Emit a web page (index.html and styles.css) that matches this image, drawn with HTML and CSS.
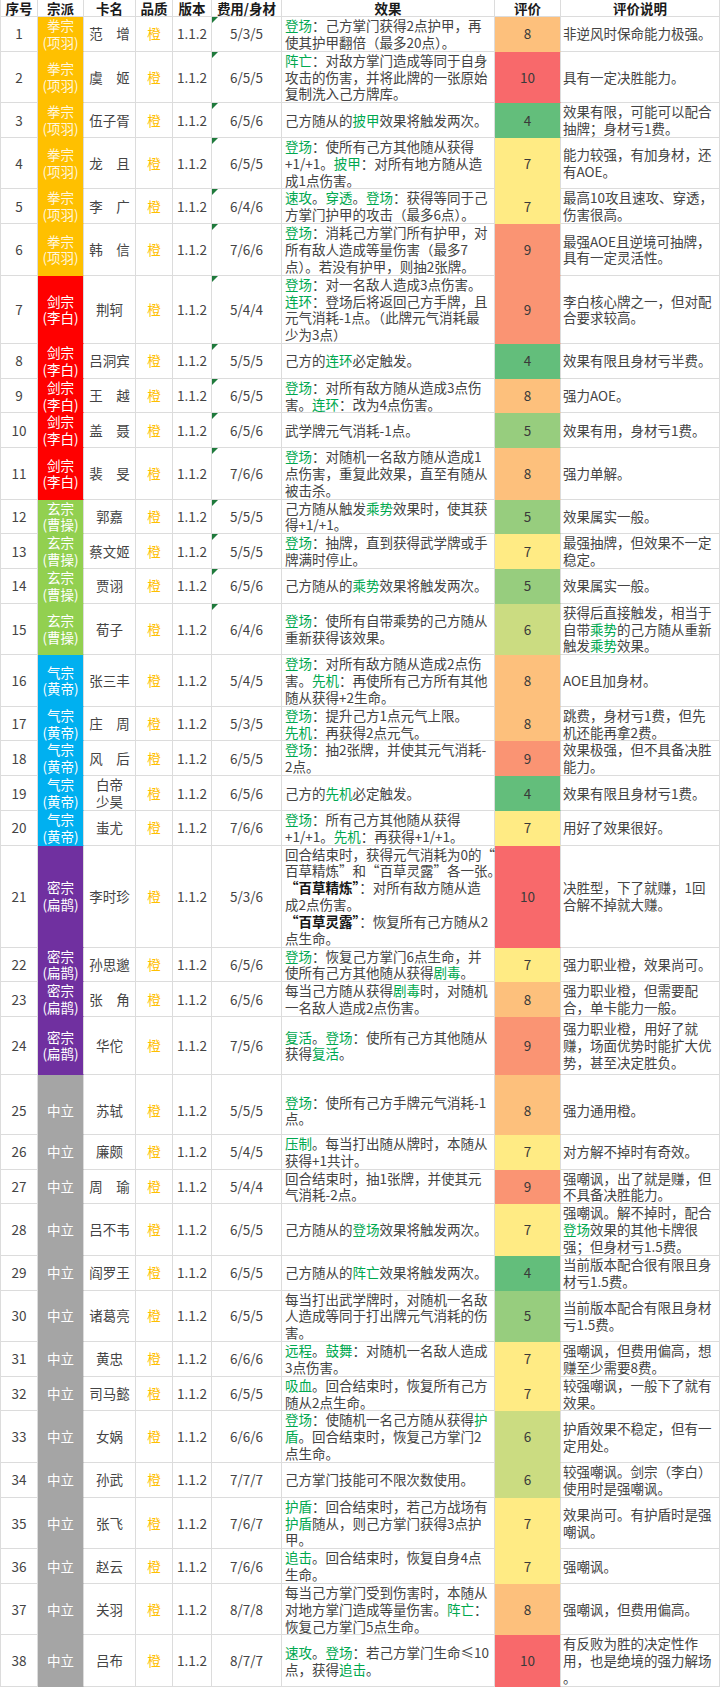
FILE: index.html
```html
<!DOCTYPE html>
<html lang="zh-CN">
<head>
<meta charset="utf-8">
<title>橙卡评价</title>
<link rel="stylesheet" href="styles.css">
</head>
<body>
<div class="page">
<table class="sheet">
<colgroup>
<col class="w-no"><col class="w-sect"><col class="w-name"><col class="w-q"><col class="w-v"><col class="w-c"><col class="w-e"><col class="w-s"><col class="w-d">
</colgroup>
<thead>
<tr><th>序号</th><th>宗派</th><th>卡名</th><th>品质</th><th>版本</th><th>费用/身材</th><th>效果</th><th>评价</th><th>评价说明</th></tr>
</thead>
<tbody>
<tr><td>1</td><td class="sect fist">拳宗<br>(项羽)</td><td>范　增</td><td class="q">橙</td><td>1.1.2</td><td class="c t">5/3/5</td><td class="e"><span class="k">登场</span>：己方掌门获得2点护甲，再<br>使其护甲翻倍（最多20点）。</td><td class="sc s8">8</td><td class="d">非逆风时保命能力极强。</td></tr>
<tr><td>2</td><td class="sect fist">拳宗<br>(项羽)</td><td>虞　姬</td><td class="q">橙</td><td>1.1.2</td><td class="c t">6/5/5</td><td class="e"><span class="k">阵亡</span>：对敌方掌门造成等同于自身<br>攻击的伤害，并将此牌的一张原始<br>复制洗入己方牌库。</td><td class="sc s10">10</td><td class="d">具有一定决胜能力。</td></tr>
<tr><td>3</td><td class="sect fist">拳宗<br>(项羽)</td><td>伍子胥</td><td class="q">橙</td><td>1.1.2</td><td class="c t">6/5/6</td><td class="e">己方随从的<span class="k">披甲</span>效果将触发两次。</td><td class="sc s4">4</td><td class="d">效果有限，可能可以配合<br>抽牌；身材亏1费。</td></tr>
<tr><td>4</td><td class="sect fist">拳宗<br>(项羽)</td><td>龙　且</td><td class="q">橙</td><td>1.1.2</td><td class="c t">6/5/5</td><td class="e"><span class="k">登场</span>：使所有己方其他随从获得<br>+1/+1。<span class="k">披甲</span>：对所有地方随从造<br>成1点伤害。</td><td class="sc s7">7</td><td class="d">能力较强，有加身材，还<br>有AOE。</td></tr>
<tr><td>5</td><td class="sect fist">拳宗<br>(项羽)</td><td>李　广</td><td class="q">橙</td><td>1.1.2</td><td class="c t">6/4/6</td><td class="e"><span class="k">速攻</span>。<span class="k">穿透</span>。<span class="k">登场</span>：获得等同于己<br>方掌门护甲的攻击（最多6点）。</td><td class="sc s7">7</td><td class="d">最高10攻且速攻、穿透，<br>伤害很高。</td></tr>
<tr><td>6</td><td class="sect fist">拳宗<br>(项羽)</td><td>韩　信</td><td class="q">橙</td><td>1.1.2</td><td class="c t">7/6/6</td><td class="e"><span class="k">登场</span>：消耗己方掌门所有护甲，对<br>所有敌人造成等量伤害（最多7<br>点）。若没有护甲，则抽2张牌。</td><td class="sc s9">9</td><td class="d">最强AOE且逆境可抽牌，<br>具有一定灵活性。</td></tr>
<tr><td>7</td><td class="sect sword">剑宗<br>(李白)</td><td>荆轲</td><td class="q">橙</td><td>1.1.2</td><td class="c t">5/4/4</td><td class="e"><span class="k">登场</span>：对一名敌人造成3点伤害。<br><span class="k">连环</span>：登场后将返回己方手牌，且<br>元气消耗-1点。（此牌元气消耗最<br>少为3点）</td><td class="sc s9">9</td><td class="d">李白核心牌之一，但对配<br>合要求较高。</td></tr>
<tr><td>8</td><td class="sect sword">剑宗<br>(李白)</td><td>吕洞宾</td><td class="q">橙</td><td>1.1.2</td><td class="c t">5/5/5</td><td class="e">己方的<span class="k">连环</span>必定触发。</td><td class="sc s4">4</td><td class="d">效果有限且身材亏半费。</td></tr>
<tr><td>9</td><td class="sect sword">剑宗<br>(李白)</td><td>王　越</td><td class="q">橙</td><td>1.1.2</td><td class="c t">6/5/5</td><td class="e"><span class="k">登场</span>：对所有敌方随从造成3点伤<br>害。<span class="k">连环</span>：改为4点伤害。</td><td class="sc s8">8</td><td class="d">强力AOE。</td></tr>
<tr><td>10</td><td class="sect sword">剑宗<br>(李白)</td><td>盖　聂</td><td class="q">橙</td><td>1.1.2</td><td class="c t">6/5/6</td><td class="e">武学牌元气消耗-1点。</td><td class="sc s5">5</td><td class="d">效果有用，身材亏1费。</td></tr>
<tr><td>11</td><td class="sect sword">剑宗<br>(李白)</td><td>裴　旻</td><td class="q">橙</td><td>1.1.2</td><td class="c t">7/6/6</td><td class="e"><span class="k">登场</span>：对随机一名敌方随从造成1<br>点伤害，重复此效果，直至有随从<br>被击杀。</td><td class="sc s8">8</td><td class="d">强力单解。</td></tr>
<tr><td>12</td><td class="sect xuan">玄宗<br>(曹操)</td><td>郭嘉</td><td class="q">橙</td><td>1.1.2</td><td class="c t">5/5/5</td><td class="e">己方随从触发<span class="k">乘势</span>效果时，使其获<br>得+1/+1。</td><td class="sc s5">5</td><td class="d">效果属实一般。</td></tr>
<tr><td>13</td><td class="sect xuan">玄宗<br>(曹操)</td><td>蔡文姬</td><td class="q">橙</td><td>1.1.2</td><td class="c t">5/5/5</td><td class="e"><span class="k">登场</span>：抽牌，直到获得武学牌或手<br>牌满时停止。</td><td class="sc s7">7</td><td class="d">最强抽牌，但效果不一定<br>稳定。</td></tr>
<tr><td>14</td><td class="sect xuan">玄宗<br>(曹操)</td><td>贾诩</td><td class="q">橙</td><td>1.1.2</td><td class="c t">6/5/6</td><td class="e">己方随从的<span class="k">乘势</span>效果将触发两次。</td><td class="sc s5">5</td><td class="d">效果属实一般。</td></tr>
<tr><td>15</td><td class="sect xuan">玄宗<br>(曹操)</td><td>荀子</td><td class="q">橙</td><td>1.1.2</td><td class="c t">6/4/6</td><td class="e"><span class="k">登场</span>：使所有自带乘势的己方随从<br>重新获得该效果。</td><td class="sc s6">6</td><td class="d">获得后直接触发，相当于<br>自带<span class="k">乘势</span>的己方随从重新<br>触发<span class="k">乘势</span>效果。</td></tr>
<tr><td>16</td><td class="sect qi">气宗<br>(黄帝)</td><td>张三丰</td><td class="q">橙</td><td>1.1.2</td><td class="c">5/4/5</td><td class="e"><span class="k">登场</span>：对所有敌方随从造成2点伤<br>害。<span class="k">先机</span>：再使所有己方所有其他<br>随从获得+2生命。</td><td class="sc s8">8</td><td class="d">AOE且加身材。</td></tr>
<tr><td>17</td><td class="sect qi">气宗<br>(黄帝)</td><td>庄　周</td><td class="q">橙</td><td>1.1.2</td><td class="c">5/3/5</td><td class="e"><span class="k">登场</span>：提升己方1点元气上限。<br><span class="k">先机</span>：再获得2点元气。</td><td class="sc s8">8</td><td class="d">跳费，身材亏1费，但先<br>机还能再拿2费。</td></tr>
<tr><td>18</td><td class="sect qi">气宗<br>(黄帝)</td><td>风　后</td><td class="q">橙</td><td>1.1.2</td><td class="c">6/5/5</td><td class="e"><span class="k">登场</span>：抽2张牌，并使其元气消耗-<br>2点。</td><td class="sc s9">9</td><td class="d">效果极强，但不具备决胜<br>能力。</td></tr>
<tr><td>19</td><td class="sect qi">气宗<br>(黄帝)</td><td>白帝<br>少昊</td><td class="q">橙</td><td>1.1.2</td><td class="c">6/5/6</td><td class="e">己方的<span class="k">先机</span>必定触发。</td><td class="sc s4">4</td><td class="d">效果有限且身材亏1费。</td></tr>
<tr><td>20</td><td class="sect qi">气宗<br>(黄帝)</td><td>蚩尤</td><td class="q">橙</td><td>1.1.2</td><td class="c">7/6/6</td><td class="e"><span class="k">登场</span>：所有己方其他随从获得<br>+1/+1。<span class="k">先机</span>：再获得+1/+1。</td><td class="sc s7">7</td><td class="d">用好了效果很好。</td></tr>
<tr><td>21</td><td class="sect mi">密宗<br>(扁鹊)</td><td>李时珍</td><td class="q">橙</td><td>1.1.2</td><td class="c">5/3/6</td><td class="e">回合结束时，获得元气消耗为0的“<br>百草精炼”和“百草灵露”各一张。<br><b class="bk">“百草精炼”</b>：对所有敌方随从造<br>成2点伤害。<br><b class="bk">“百草灵露”</b>：恢复所有己方随从2<br>点生命。</td><td class="sc s10">10</td><td class="d">决胜型，下了就赚，1回<br>合解不掉就大赚。</td></tr>
<tr><td>22</td><td class="sect mi">密宗<br>(扁鹊)</td><td>孙思邈</td><td class="q">橙</td><td>1.1.2</td><td class="c">6/5/6</td><td class="e"><span class="k">登场</span>：恢复己方掌门6点生命，并<br>使所有己方其他随从获得<span class="k">剧毒</span>。</td><td class="sc s7">7</td><td class="d">强力职业橙，效果尚可。</td></tr>
<tr><td>23</td><td class="sect mi">密宗<br>(扁鹊)</td><td>张　角</td><td class="q">橙</td><td>1.1.2</td><td class="c">6/5/6</td><td class="e">每当己方随从获得<span class="k">剧毒</span>时，对随机<br>一名敌人造成2点伤害。</td><td class="sc s8">8</td><td class="d">强力职业橙，但需要配<br>合，单卡能力一般。</td></tr>
<tr class="h58"><td>24</td><td class="sect mi">密宗<br>(扁鹊)</td><td>华佗</td><td class="q">橙</td><td>1.1.2</td><td class="c">7/5/6</td><td class="e"><span class="k">复活</span>。<span class="k">登场</span>：使所有己方其他随从<br>获得<span class="k">复活</span>。</td><td class="sc s9">9</td><td class="d">强力职业橙，用好了就<br>赚，场面优势时能扩大优<br>势，甚至决定胜负。</td></tr>
<tr class="h60"><td>25</td><td class="sect neu">中立</td><td>苏轼</td><td class="q">橙</td><td>1.1.2</td><td class="c">5/5/5</td><td class="e"><span class="k">登场</span>：使所有己方手牌元气消耗-1<br>点。</td><td class="sc s8">8</td><td class="d">强力通用橙。</td></tr>
<tr><td>26</td><td class="sect neu">中立</td><td>廉颇</td><td class="q">橙</td><td>1.1.2</td><td class="c">5/4/5</td><td class="e"><span class="k">压制</span>。每当打出随从牌时，本随从<br>获得+1共计。</td><td class="sc s7">7</td><td class="d">对方解不掉时有奇效。</td></tr>
<tr><td>27</td><td class="sect neu">中立</td><td>周　瑜</td><td class="q">橙</td><td>1.1.2</td><td class="c">5/4/4</td><td class="e">回合结束时，抽1张牌，并使其元<br>气消耗-2点。</td><td class="sc s9">9</td><td class="d">强嘲讽，出了就是赚，但<br>不具备决胜能力。</td></tr>
<tr><td>28</td><td class="sect neu">中立</td><td>吕不韦</td><td class="q">橙</td><td>1.1.2</td><td class="c">6/5/5</td><td class="e">己方随从的<span class="k">登场</span>效果将触发两次。</td><td class="sc s7">7</td><td class="d">强嘲讽。解不掉时，配合<br><span class="k">登场</span>效果的其他卡牌很<br>强；但身材亏1.5费。</td></tr>
<tr><td>29</td><td class="sect neu">中立</td><td>阎罗王</td><td class="q">橙</td><td>1.1.2</td><td class="c">6/5/5</td><td class="e">己方随从的<span class="k">阵亡</span>效果将触发两次。</td><td class="sc s4">4</td><td class="d">当前版本配合很有限且身<br>材亏1.5费。</td></tr>
<tr><td>30</td><td class="sect neu">中立</td><td>诸葛亮</td><td class="q">橙</td><td>1.1.2</td><td class="c">6/5/5</td><td class="e">每当打出武学牌时，对随机一名敌<br>人造成等同于打出牌元气消耗的伤<br>害。</td><td class="sc s5">5</td><td class="d">当前版本配合有限且身材<br>亏1.5费。</td></tr>
<tr><td>31</td><td class="sect neu">中立</td><td>黄忠</td><td class="q">橙</td><td>1.1.2</td><td class="c">6/6/6</td><td class="e"><span class="k">远程</span>。<span class="k">鼓舞</span>：对随机一名敌人造成<br>3点伤害。</td><td class="sc s7">7</td><td class="d">强嘲讽，但费用偏高，想<br>赚至少需要8费。</td></tr>
<tr><td>32</td><td class="sect neu">中立</td><td>司马懿</td><td class="q">橙</td><td>1.1.2</td><td class="c">6/5/5</td><td class="e"><span class="k">吸血</span>。回合结束时，恢复所有己方<br>随从2点生命。</td><td class="sc s7">7</td><td class="d">较强嘲讽，一般下了就有<br>效果。</td></tr>
<tr><td>33</td><td class="sect neu">中立</td><td>女娲</td><td class="q">橙</td><td>1.1.2</td><td class="c">6/6/6</td><td class="e"><span class="k">登场</span>：使随机一名己方随从获得<span class="k">护</span><br><span class="k">盾</span>。回合结束时，恢复己方掌门2<br>点生命。</td><td class="sc s6">6</td><td class="d">护盾效果不稳定，但有一<br>定用处。</td></tr>
<tr><td>34</td><td class="sect neu">中立</td><td>孙武</td><td class="q">橙</td><td>1.1.2</td><td class="c">7/7/7</td><td class="e">己方掌门技能可不限次数使用。</td><td class="sc s6">6</td><td class="d">较强嘲讽。剑宗（李白）<br>使用时是强嘲讽。</td></tr>
<tr><td>35</td><td class="sect neu">中立</td><td>张飞</td><td class="q">橙</td><td>1.1.2</td><td class="c">7/6/7</td><td class="e"><span class="k">护盾</span>：回合结束时，若己方战场有<br><span class="k">护盾</span>随从，则己方掌门获得3点护<br>甲。</td><td class="sc s7">7</td><td class="d">效果尚可。有护盾时是强<br>嘲讽。</td></tr>
<tr><td>36</td><td class="sect neu">中立</td><td>赵云</td><td class="q">橙</td><td>1.1.2</td><td class="c">7/6/6</td><td class="e"><span class="k">追击</span>。回合结束时，恢复自身4点<br>生命。</td><td class="sc s7">7</td><td class="d">强嘲讽。</td></tr>
<tr><td>37</td><td class="sect neu">中立</td><td>关羽</td><td class="q">橙</td><td>1.1.2</td><td class="c">8/7/8</td><td class="e">每当己方掌门受到伤害时，本随从<br>对地方掌门造成等量伤害。<span class="k">阵亡</span>：<br>恢复己方掌门5点生命。</td><td class="sc s8">8</td><td class="d">强嘲讽，但费用偏高。</td></tr>
<tr><td>38</td><td class="sect neu">中立</td><td>吕布</td><td class="q">橙</td><td>1.1.2</td><td class="c">8/7/7</td><td class="e"><span class="k">速攻</span>。<span class="k">登场</span>：若己方掌门生命≤10<br>点，获得<span class="k">追击</span>。</td><td class="sc s10">10</td><td class="d">有反败为胜的决定性作<br>用，也是绝境的强力解场<br>。</td></tr>
</tbody>
</table>
</div>
</body>
</html>
```

FILE: styles.css
```css
* { box-sizing: border-box; }

body {
  margin: 0;
  background: #ffffff;
  font-family: "Noto Sans CJK SC", "Noto Sans", sans-serif;
}

.page {
  width: 720px;
}

.sheet {
  width: 720px;
  table-layout: fixed;
  border-collapse: separate;
  border-spacing: 0;
  font-size: 13.5px;
  line-height: 16.85px;
  color: #444444;
}

.w-no { width: 38px; }
.w-sect { width: 46px; }
.w-name { width: 52px; }
.w-q { width: 37px; }
.w-v { width: 39px; }
.w-c { width: 70px; }
.w-e { width: 213px; }
.w-s { width: 66px; }
.w-d { width: 159px; }

.sheet th,
.sheet td {
  padding: 0;
  border-right: 1px solid #dcdcdc;
  border-bottom: 1px solid #dcdcdc;
  text-align: center;
  vertical-align: middle;
  white-space: nowrap;
}

.sheet tr > :first-child {
  border-left: 1px solid #dcdcdc;
}

.sheet th {
  font-weight: bold;
  color: #1a1a1a;
  line-height: 16px;
}

.sect {
  color: #ffffff;
  border-bottom-color: transparent !important;
}
.fist { background: #ffc000; color: #fff6dc; }
.sword { background: #ff0000; }
.xuan { background: #92d050; }
.qi { background: #00b0f0; }
.mi { background: #7030a0; }
.neu { background: #a5a5a5; }

.q { color: #ffc000; }

.c.t { position: relative; }
.c.t::before {
  content: "";
  position: absolute;
  left: 0;
  top: 0;
  border-top: 6px solid #1f7a3c;
  border-right: 6px solid transparent;
}

.e {
  text-align: left !important;
  padding-left: 3px !important;
}

.d {
  text-align: left !important;
  padding-left: 2px !important;
}

.k { color: #00a84f; }
.bk { font-weight: bold; color: #151515; }

.sc {
  color: #3a3a3a;
  border-bottom-color: transparent !important;
}
.s4 { background: #63be7b; }
.s5 { background: #97cd7e; }
.s6 { background: #cbdc81; }
.s7 { background: #ffeb84; }
.s8 { background: #fdc07c; }
.s9 { background: #fa9473; }
.s10 { background: #f8696b; }

.h58 { height: 58px; }
.h60 { height: 60px; }
.h60 td { padding-top: 12px; }
```
